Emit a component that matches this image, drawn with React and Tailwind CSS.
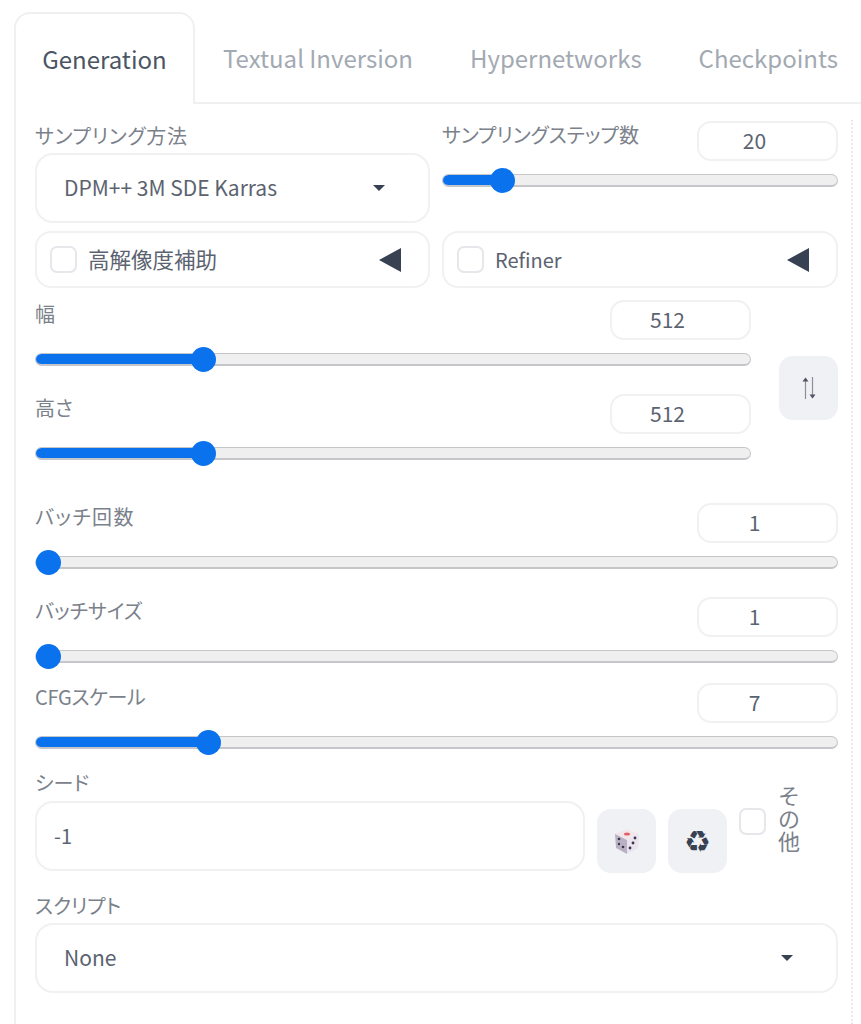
const font = { fontFamily: '"Noto Sans CJK JP", "Noto Sans", sans-serif' }

function Label({ children, className = '' }) {
  return <span className={`block text-[20px] leading-[28px] text-[#7b818b] [font-feature-settings:'palt'] ${className}`}>{children}</span>
}

function Slider({ percent }) {
  return (
    <div className="relative h-[28px] mt-[5px] flex items-center">
      <div className="w-full h-[13px] rounded-full bg-[#efefef] border border-[#c4c6c9] border-b-2 overflow-hidden">
        <div className="h-full bg-[#0b72ee]" style={{ width: `${percent}%` }} />
      </div>
      <div
        className="absolute top-0 w-[25px] h-[25px] mt-[2px] -ml-[12px] rounded-full bg-[#0b72ee]"
        style={{ left: `${percent}%` }}
      />
    </div>
  )
}

function NumberBox({ value }) {
  return (
    <div className="w-[141px] h-[40px] shrink-0 rounded-[14px] border-2 border-[#f0f1f3] bg-white flex items-center justify-center pr-[26px] text-[21px] text-[#5b6370]">
      {value}
    </div>
  )
}

function SliderField({ label, value, percent, labelClass = '', className = '' }) {
  return (
    <div className={className}>
      <div className="flex justify-between items-start h-[40px]">
        <Label className={labelClass}>{label}</Label>
        <NumberBox value={value} />
      </div>
      <Slider percent={percent} />
    </div>
  )
}

function Dropdown({ value, className = '' }) {
  return (
    <div className={`h-[70px] rounded-[18px] border-2 border-[#f0f1f3] bg-white flex items-center justify-between pl-[27px] pr-[43px] ${className}`}>
      <span className="text-[21px] text-[#5b6370]">{value}</span>
      <span className="w-0 h-0 border-x-[6px] border-x-transparent border-t-[6px] border-t-[#374151]" />
    </div>
  )
}

function Accordion({ label, labelClass = 'text-[20px]' }) {
  return (
    <div className="h-[57px] rounded-[16px] border-2 border-[#f0f1f3] bg-white flex items-center justify-between pl-[13px] pr-[27px]">
      <div className="flex items-center gap-[11px]">
        <span className="w-[27px] h-[27px] rounded-[7px] border-2 border-[#e5e7eb] bg-white" />
        <span className={`${labelClass} text-[#5b6370]`}>{label}</span>
      </div>
      <span className="w-0 h-0 border-y-[12px] border-y-transparent border-r-[22px] border-r-[#374151]" />
    </div>
  )
}

function IconButton({ children, className = '' }) {
  return (
    <button className={`rounded-[14px] bg-[#f0f1f5] flex items-center justify-center shrink-0 ${className}`}>
      {children}
    </button>
  )
}

function Dice() {
  return (
    <svg width="28" height="28" viewBox="0 0 28 28">
      <path d="M14 2 L26 7 L14 13 L2 7 Z" fill="#f3e6ea" />
      <path d="M2 7 L14 13 L14 27 L3 21 Z" fill="#b9b0c4" />
      <path d="M26 7 L14 13 L14 27 L25 21 Z" fill="#e9e4ee" />
      <ellipse cx="14" cy="7" rx="3" ry="1.5" fill="#e0606a" />
      <circle cx="6" cy="12" r="1.3" fill="#3d3550" />
      <circle cx="10" cy="20" r="1.3" fill="#3d3550" />
      <circle cx="6" cy="17" r="1.2" fill="#3d3550" />
      <circle cx="22" cy="11" r="1.4" fill="#3d3550" />
      <circle cx="20" cy="16" r="1.4" fill="#3d3550" />
      <circle cx="17" cy="21" r="1.4" fill="#3d3550" />
    </svg>
  )
}

function SwapIcon() {
  return (
    <svg width="16" height="24" viewBox="0 0 16 24" fill="none" stroke="#8a909a" strokeWidth="1.2">
      <path d="M4.5 23 V2" />
      <path d="M1.5 5.5 L4.5 1.5 L7.5 5.5 Z" fill="#4b5563" stroke="none" />
      <path d="M11.5 1 V22" />
      <path d="M8.5 18.5 L11.5 22.5 L14.5 18.5 Z" fill="#4b5563" stroke="none" />
    </svg>
  )
}

export default function App() {
  const tabs = ['Textual Inversion', 'Hypernetworks', 'Checkpoints']

  return (
    <div style={font} className="w-[861px] h-[1024px] bg-white overflow-hidden pt-[12px]">
      <div className="flex h-[92px] pl-[14px]">
        <div className="w-[181px] shrink-0 rounded-t-[16px] border-2 border-b-0 border-[#eff0f2] bg-white flex items-center justify-center text-[24px] text-[#4b5563]">
          Generation
        </div>
        <div className="flex-1 flex items-center pl-[28px] pt-[2px] gap-[57px] border-b-2 border-[#eff0f2] text-[24px] text-[#a3a9b2] whitespace-nowrap">
          {tabs.map((t) => <span key={t}>{t}</span>)}
        </div>
      </div>

      <div className="ml-[14px] border-l-2 border-[#eff0f2] pl-[19px] pt-[16px] h-[920px]">
        <div className="w-[818px] h-[904px] pr-[13px] pt-[2px] border-r-2 border-dotted border-[#e9ebee]">
          <div className="grid grid-cols-[395px_396px] gap-x-[12px]">
            <div>
              <Label className="mb-[3px] tracking-[0.75px]">サンプリング方法</Label>
              <Dropdown value="DPM++ 3M SDE Karras" />
            </div>
            <SliderField label="サンプリングステップ数" value="20" percent={15.2} className="-mt-[1px]" />
          </div>

          <div className="grid grid-cols-[395px_396px] gap-x-[12px] mt-[8px]">
            <Accordion label="高解像度補助" labelClass="text-[21.5px]" />
            <Accordion label="Refiner" />
          </div>

          <div className="flex items-start justify-between mt-[12px]">
            <div className="w-[716px]">
              <SliderField label="幅" value="512" percent={23.5} />
              <SliderField label="高さ" value="512" percent={23.5} className="mt-[21px]" />
            </div>
            <IconButton className="w-[59px] h-[64px] mt-[56px]"><SwapIcon /></IconButton>
          </div>

          <SliderField label="バッチ回数" labelClass="tracking-[1.4px]" value="1" percent={1.6} className="mt-[36px]" />
          <SliderField label="バッチサイズ" value="1" percent={1.6} className="mt-[21px]" />
          <SliderField label="CFGスケール" labelClass="tracking-[-0.3px]" value="7" percent={21.5} className="mt-[13px]" />

          <div className="mt-[13px]">
            <Label className="mb-[4px]">シード</Label>
            <div className="flex items-start">
              <div className="w-[550px] h-[70px] rounded-[18px] border-2 border-[#f0f1f3] bg-white flex items-center pl-[17px] text-[20px] text-[#5b6370]">
                -1
              </div>
              <IconButton className="w-[59px] h-[64px] ml-[12px] mt-[8px]"><Dice /></IconButton>
              <IconButton className="w-[59px] h-[64px] ml-[12px] mt-[8px] text-[30px] text-[#374151] [font-family:'DejaVu_Sans',sans-serif]">♻</IconButton>
              <span className="w-[27px] h-[27px] ml-[12px] mt-[7px] rounded-[7px] border-2 border-[#e5e7eb] bg-white shrink-0" />
              <span className="w-[24px] ml-[12px] -mt-[18px] text-[22px] leading-[23px] text-[#7b818b]">その他</span>
            </div>
          </div>

          <div className="mt-[19px]">
            <Label className="mb-[3px]">スクリプト</Label>
            <Dropdown value="None" />
          </div>
        </div>
      </div>
    </div>
  )
}
